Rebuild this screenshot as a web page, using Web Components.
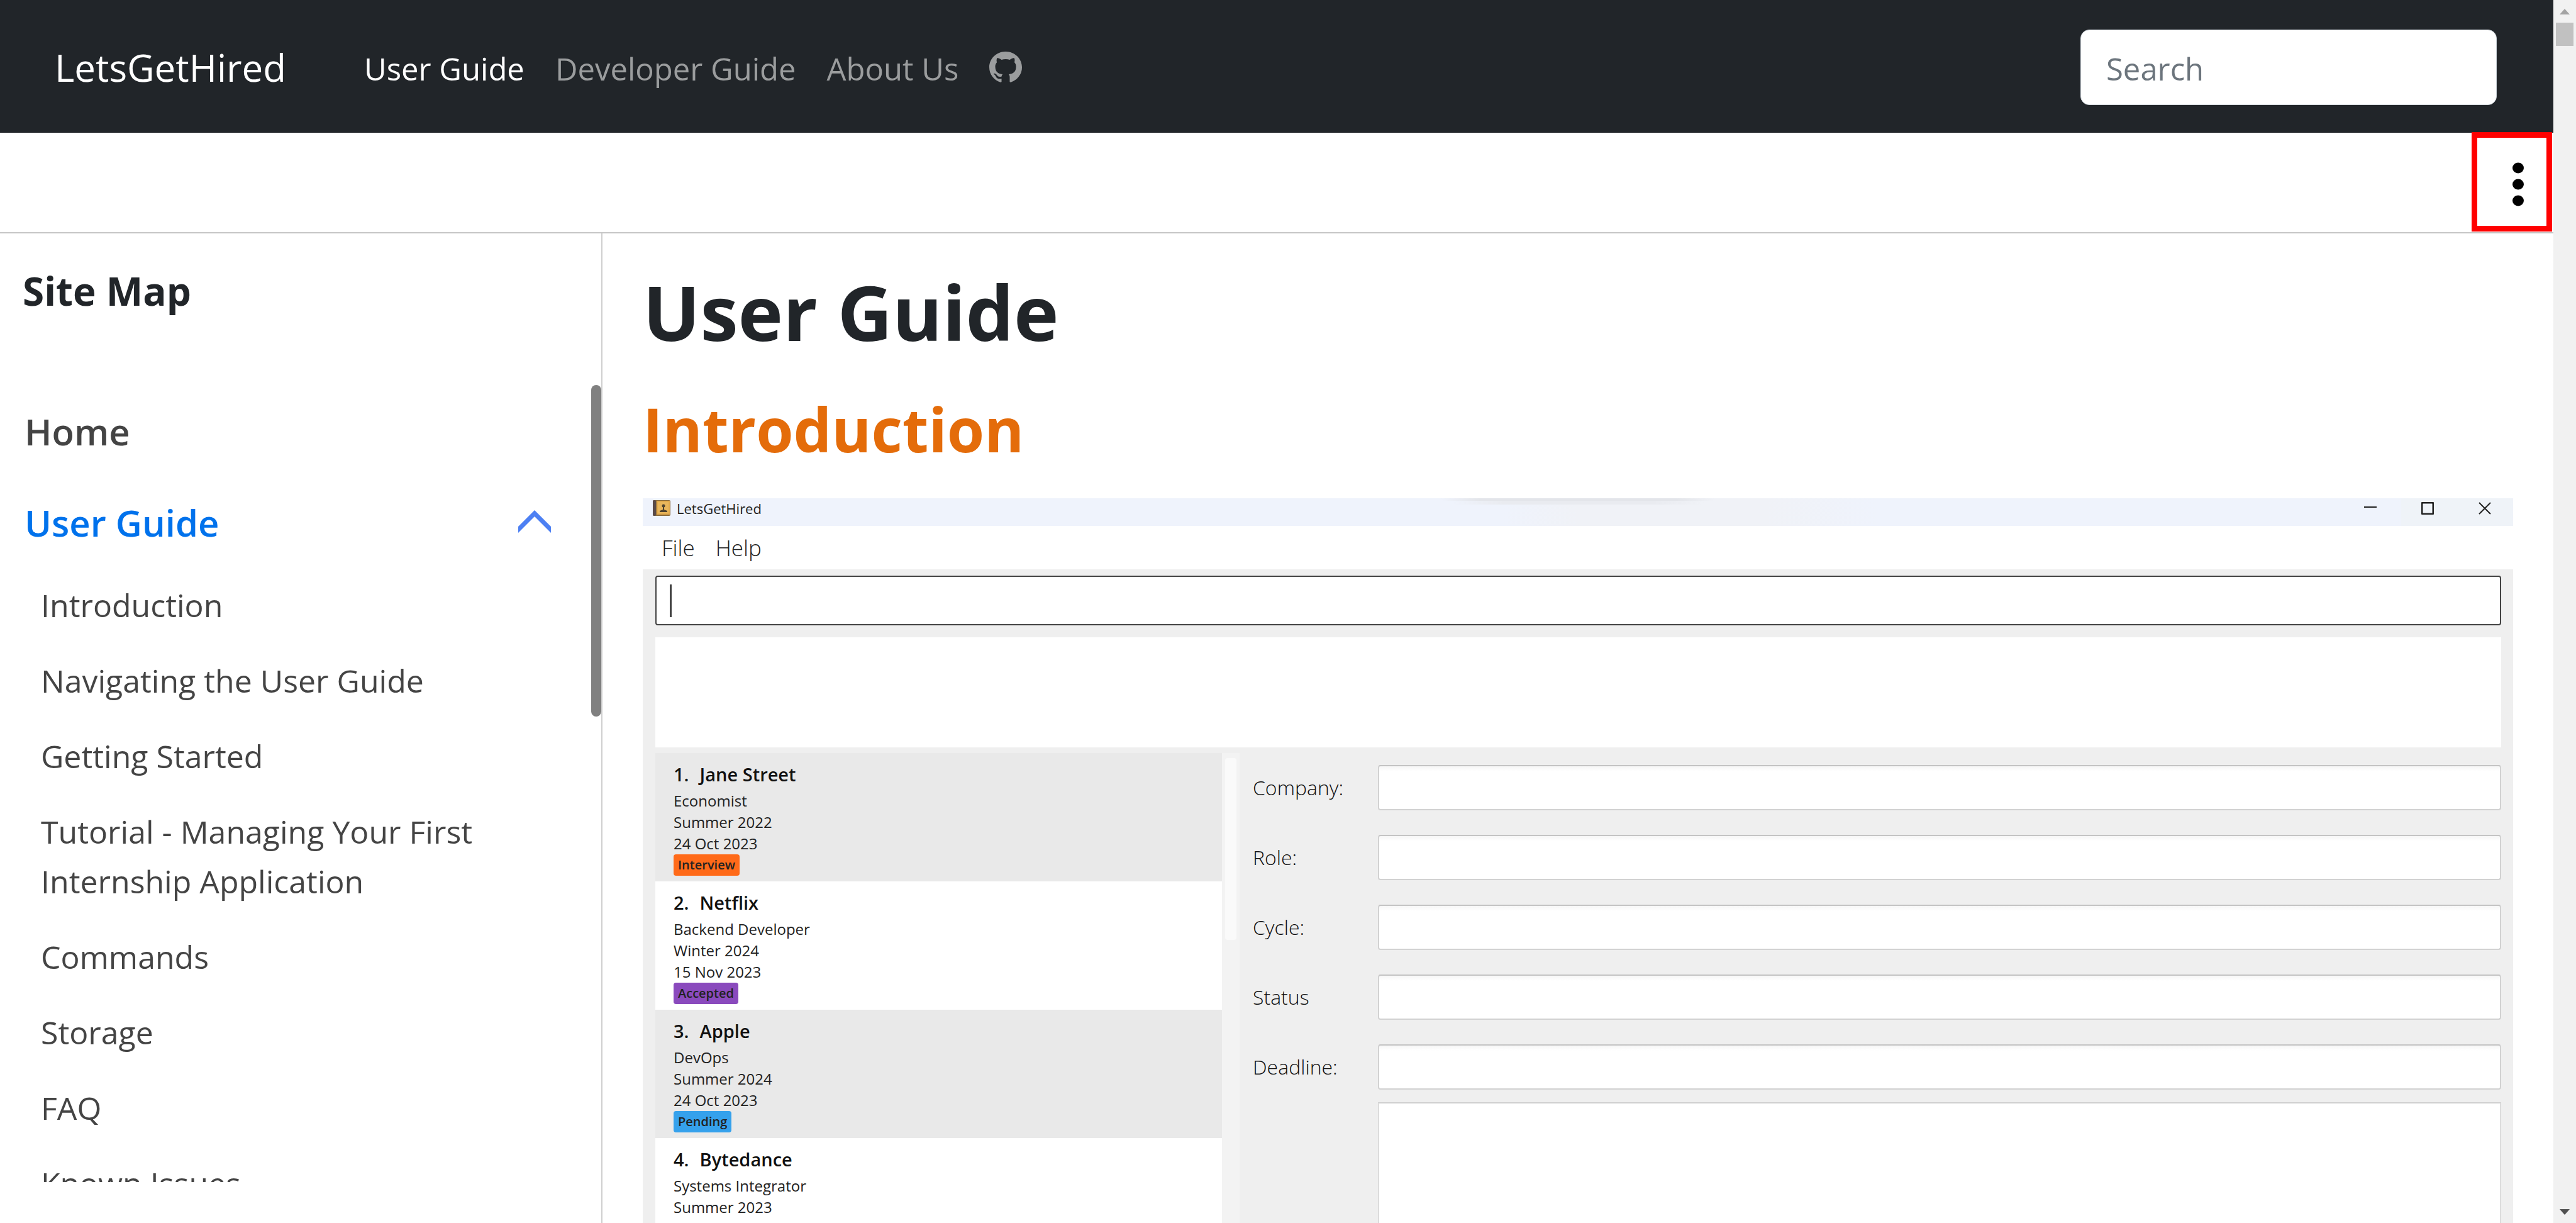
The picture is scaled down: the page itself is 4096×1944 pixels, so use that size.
<!DOCTYPE html>
<html lang="en">
<head>
<meta charset="utf-8">
<title>User Guide - LetsGetHired</title>
<style>
  html, body { margin: 0; height: 100%; overflow: hidden; background: #fff; }
  body { font-family: "Open Sans", "Noto Sans", sans-serif; color: #212529; }
</style>
</head>
<body>
<doc-page>
  <site-header slot="header"></site-header>
  <page-tools slot="tools"></page-tools>
  <site-map slot="sidebar"></site-map>
  <guide-article>
    <app-window></app-window>
  </guide-article>
</doc-page>

<script>
const define = (name, html) => {
  const template = document.createElement('template');
  template.innerHTML = html;
  customElements.define(name, class extends HTMLElement {
    constructor() {
      super();
      this.attachShadow({ mode: 'open' }).append(template.content.cloneNode(true));
    }
  });
};

/* Page frame: header, tool strip, sidebar + content, page scrollbar */
define('doc-page', `
<style>
  :host { display: flex; height: 100vh; }
  .page { flex: 1; min-width: 0; display: flex; flex-direction: column; }
  .body { flex: 1; min-height: 0; display: flex; }
  main { flex: 1; min-width: 0; overflow: hidden; }
</style>
<div class="page">
  <slot name="header"></slot>
  <slot name="tools"></slot>
  <div class="body">
    <slot name="sidebar"></slot>
    <main><slot></slot></main>
  </div>
</div>
<page-scrollbar></page-scrollbar>`);

define('page-scrollbar', `
<style>
  :host { display: flex; flex-direction: column; align-items: center; width: 36px; background: #f1f1f1; }
  button { display: flex; align-items: center; justify-content: center; width: 36px; height: 36px; margin: 0; padding: 0; border: 0; background: none; }
  button:first-child { padding-top: 3px; box-sizing: border-box; }
  svg { display: block; width: 16px; height: 9px; }
  .thumb { width: 28px; height: 37px; background: #c1c1c1; }
  .track { flex: 1; }
</style>
<button aria-label="Scroll up"><svg viewBox="0 0 16 9"><path d="M8 0 16 9H0Z" fill="#a3a3a3"/></svg></button>
<div class="thumb"></div>
<div class="track"></div>
<button aria-label="Scroll down"><svg viewBox="0 0 16 9"><path d="M0 0H16L8 9Z" fill="#505050"/></svg></button>`);

define('site-header', `
<style>
  :host { display: block; background: #212529; }
  header { display: flex; align-items: center; height: 211px; box-sizing: border-box; padding: 2px 90px 0 87px; }
  a { text-decoration: none; white-space: nowrap; }
  .brand { font-size: 60px; line-height: 80px; color: #fff; margin-right: 124px; }
  nav { display: flex; align-items: center; gap: 49px; flex: 1; padding-top: 4px; font-size: 49px; line-height: 72px; }
  nav a { color: #9b9d9e; }
  nav a.active { color: #fff; }
  nav svg { display: block; width: 52px; height: 50px; margin-bottom: 3px; }
  input { width: 662px; height: 120px; box-sizing: border-box; padding: 4px 40px 0; border: 1px solid #ced4da; border-radius: 14px; background: #fff; font: 49px "Open Sans", "Noto Sans", sans-serif; color: #212529; }
  input::placeholder { color: #6c757d; opacity: 1; }
</style>
<header>
  <a class="brand" href="#">LetsGetHired</a>
  <nav>
    <a class="active" href="#">User Guide</a>
    <a href="#">Developer Guide</a>
    <a href="#">About Us</a>
    <a href="#" aria-label="GitHub"><svg viewBox="0 0 16 16" preserveAspectRatio="none" fill="currentColor"><path d="M8 0C3.58 0 0 3.58 0 8c0 3.54 2.29 6.53 5.47 7.59.4.07.55-.17.55-.38 0-.19-.01-.82-.01-1.49-2.01.37-2.53-.49-2.69-.94-.09-.23-.48-.94-.82-1.13-.28-.15-.68-.52-.01-.53.63-.01 1.08.58 1.23.82.72 1.21 1.87.87 2.33.66.07-.52.28-.87.51-1.07-1.78-.2-3.64-.89-3.64-3.95 0-.87.31-1.59.82-2.15-.08-.2-.36-1.02.08-2.12 0 0 .67-.21 2.2.82.64-.18 1.32-.27 2-.27s1.36.09 2 .27c1.53-1.04 2.2-.82 2.2-.82.44 1.1.16 1.92.08 2.12.51.56.82 1.27.82 2.15 0 3.07-1.87 3.75-3.65 3.95.29.25.54.73.54 1.48 0 1.07-.01 1.93-.01 2.2 0 .21.15.46.55.38A8.01 8.01 0 0 0 16 8c0-4.42-3.58-8-8-8z"/></svg></a>
  </nav>
  <input type="search" placeholder="Search" aria-label="Search">
</header>`);

define('page-tools', `
<style>
  :host { display: flex; justify-content: flex-end; height: 158px; padding-right: 2px; border-bottom: 2px solid #c6c6c6; }
  button { display: flex; align-items: center; justify-content: center; width: 128px; height: 158px; margin-top: -1px; box-sizing: border-box; border: 9px solid #f00; padding: 8px 0 0 20px; background: #fff; }
  svg { display: block; width: 18px; height: 70px; }
</style>
<button aria-label="More options"><svg viewBox="0 0 18 70"><ellipse cx="9" cy="9" rx="9" ry="8.5"/><ellipse cx="9" cy="35" rx="9" ry="8.5"/><ellipse cx="9" cy="61" rx="9" ry="8.5"/></svg></button>`);

define('site-map', `
<style>
  :host { display: flex; flex-direction: column; width: 956px; border-right: 2px solid #cfcfcf; }
  h2 { margin: 0; padding: 51px 36px 110px; font-size: 62px; line-height: 80px; font-weight: 700; }
  .scroller { flex: 1; min-height: 0; display: flex; margin-bottom: 65px; overflow: hidden; }
  nav { flex: 1; padding: 34px 64px 0 39px; }
  a { color: #444; text-decoration: none; }
  .top { display: flex; align-items: center; justify-content: space-between; font-size: 58px; line-height: 80px; font-weight: 600; }
  .open { margin-top: 65px; color: #0072ec; }
  .open a { color: inherit; }
  button { display: block; margin: 0; padding: 0 0 4px; border: 0; background: none; }
  svg { display: block; width: 52px; height: 36px; }
  ul { list-style: none; margin: 52px 0 0; padding: 0 0 0 26px; display: flex; flex-direction: column; gap: 41px; font-size: 50px; line-height: 79px; }
  .thumb { width: 16px; height: 527px; border-radius: 8px; background: #808080; }
</style>
<h2>Site Map</h2>
<div class="scroller">
  <nav aria-label="Site map">
    <div class="top"><a href="#">Home</a></div>
    <div class="top open"><a href="#">User Guide</a><button aria-label="Collapse User Guide"><svg viewBox="0 0 52 36"><path d="M26 0 52 26V36L26 10 0 36V26Z" fill="#4d80f3"/></svg></button></div>
    <ul>
      <li><a href="#">Introduction</a></li>
      <li><a href="#">Navigating the User Guide</a></li>
      <li><a href="#">Getting Started</a></li>
      <li><a href="#">Tutorial - Managing Your First Internship Application</a></li>
      <li><a href="#">Commands</a></li>
      <li><a href="#">Storage</a></li>
      <li><a href="#">FAQ</a></li>
      <li><a href="#">Known Issues</a></li>
    </ul>
  </nav>
  <div class="thumb"></div>
</div>`);

define('guide-article', `
<style>
  :host { display: block; padding: 54px 64px 0; }
  h1 { margin: 0 0 61px; font-size: 121px; line-height: 140px; font-weight: 700; }
  h2 { margin: 0 0 54px; font-size: 96px; line-height: 112px; font-weight: 700; color: #e46c0a; }
</style>
<h1>User Guide</h1>
<h2>Introduction</h2>
<slot></slot>`);

/* The LetsGetHired desktop application */
define('app-window', `
<style>
  :host { display: block; background: #efefef; color: #222; }
  .title { display: flex; align-items: flex-start; height: 44px; font-size: 22px; line-height: 28px;
    background:
      linear-gradient(90deg, #eff3fc00, #e3e5ea 14%, #e3e5ea 86%, #f0f2f700) 50% 0 / 434px 4px no-repeat,
      linear-gradient(90deg, #eff3fc00, #e9ebf0 20%, #e9ebf0 80%, #f0f2f700) 50% 4px / 400px 6px no-repeat,
      linear-gradient(90deg, #eff3fc 46%, #f0f2f7 50% 60%, #eff3fc 66% 94%, #eff3f8 94%); }
  .title svg.icon { width: 28px; height: 25px; margin: 3px 10px 0 16px; }
  .title span { flex: 1; margin-top: 2px; }
  .title button { display: flex; align-items: center; justify-content: center; width: 91px; height: 32px; padding: 0; border: 0; background: none; }
  .title button svg { width: 20px; height: 20px; fill: none; stroke: #222; }
  .menu { display: flex; gap: 33px; height: 69px; padding-left: 30px; background: #fff; }
  .menu button { margin: 0; padding: 0; border: 0; background: none; font: 300 35px "Open Sans", "Noto Sans", sans-serif; color: #222; }
  .body { padding: 10px 19px 0 20px; }
  .command { display: block; width: 100%; height: 79px; box-sizing: border-box; border: 2px solid #444; border-radius: 4px; padding: 0 20px; font: 35px "Open Sans", sans-serif;
    background: linear-gradient(#444, #444) 21px 12px / 3px 52px no-repeat #fff; }
  .result { height: 175px; margin: 19px 0 9px; background: #fff; }
  .columns { display: flex; }
  ol { list-style: none; flex: 0 0 901px; margin: 0; padding: 0; }
  .bar { width: 28px; padding-top: 8px; box-sizing: border-box; background: #f3f3f3; }
  .bar div { width: 18px; height: 289px; margin: 0 5px; border-radius: 4px; background: #fafafa; }
  form { flex: 1; padding: 19px 0 0 21px; display: flex; flex-direction: column; gap: 39px; }
  form textarea { display: block; height: 420px; margin: -19px 0 0 199px; box-sizing: border-box; border: 0 solid #dcdcdc; border-width: 2px 2px 0; border-top-color: #cfcfcf; background: #fff; resize: none; }
</style>
<div class="title">
  <svg class="icon" viewBox="0 0 28 25"><rect width="28" height="25" rx="2" fill="#8a6a3c"/><rect x="6" y="1" width="21" height="22" fill="#e2aa4c"/><rect x="8" y="3" width="17" height="18" fill="#e9b65c"/><rect width="5" height="25" rx="2" fill="#5a4a48"/><circle cx="17" cy="9" r="2.500" fill="#4f432e"/><path d="M16 11h2v4l5 2v2H11v-2l5-2z" fill="#4f432e"/></svg>
  <span>LetsGetHired</span>
  <button aria-label="Minimize"><svg viewBox="0 0 20 20"><path d="M0 8H20" stroke-width="2"/></svg></button>
  <button aria-label="Maximize"><svg viewBox="0 0 20 20"><rect x="1" y="1" width="18" height="18" rx="2" stroke-width="3"/></svg></button>
  <button aria-label="Close"><svg viewBox="0 0 20 20"><path d="M1 1 19 19M19 1 1 19" stroke-width="2"/></svg></button>
</div>
<div class="menu"><button>File</button><button>Help</button></div>
<div class="body">
  <input class="command" type="text" aria-label="Command">
  <div class="result"></div>
  <div class="columns">
    <ol>
      <li><internship-card style="--row:#e9e9e9;--tag:#ff6a19"><span slot="no">1.</span><span slot="name">Jane Street</span><span slot="role">Economist</span><span slot="cycle">Summer 2022</span><span slot="date">24 Oct 2023</span><span slot="status">Interview</span></internship-card></li>
      <li><internship-card style="--row:#fff;--tag:#8a4abd"><span slot="no">2.</span><span slot="name">Netflix</span><span slot="role">Backend Developer</span><span slot="cycle">Winter 2024</span><span slot="date">15 Nov 2023</span><span slot="status">Accepted</span></internship-card></li>
      <li><internship-card style="--row:#e9e9e9;--tag:#35a1ec"><span slot="no">3.</span><span slot="name">Apple</span><span slot="role">DevOps</span><span slot="cycle">Summer 2024</span><span slot="date">24 Oct 2023</span><span slot="status">Pending</span></internship-card></li>
      <li><internship-card style="--row:#fff"><span slot="no">4.</span><span slot="name">Bytedance</span><span slot="role">Systems Integrator</span><span slot="cycle">Summer 2023</span></internship-card></li>
    </ol>
    <div class="bar"><div></div></div>
    <form>
      <form-row label="Company:"></form-row>
      <form-row label="Role:"></form-row>
      <form-row label="Cycle:"></form-row>
      <form-row label="Status"></form-row>
      <form-row label="Deadline:"></form-row>
      <textarea aria-label="Notes"></textarea>
    </form>
  </div>
</div>`);

define('internship-card', `
<style>
  :host { display: block; height: 204px; box-sizing: border-box; padding: 14px 28px 0 29px; background: var(--row); font-size: 24px; line-height: 34px; }
  .head { display: flex; gap: 17px; margin-bottom: 5px; font-size: 29px; line-height: 40px; font-weight: 600; color: #111; }
  .tag { display: inline-block; padding: 0 7px; border-radius: 4px; background: var(--tag, transparent); font-size: 20px; font-weight: 600; vertical-align: top; }
</style>
<div class="head"><slot name="no"></slot><slot name="name"></slot></div>
<div><slot name="role"></slot></div>
<div><slot name="cycle"></slot></div>
<div><slot name="date"></slot></div>
<div class="tag"><slot name="status"></slot></div>`);

customElements.define('form-row', class extends HTMLElement {
  connectedCallback() {
    if (this.shadowRoot) return;
    this.attachShadow({ mode: 'open' }).innerHTML = `
<style>
  :host { display: flex; align-items: center; }
  label { width: 199px; font-size: 32px; line-height: 44px; font-weight: 300; color: #111; }
  input { flex: 1; min-width: 0; height: 72px; box-sizing: border-box; padding: 0 12px; border: 2px solid #d2d2d2; border-top-color: #c4c4c4; border-radius: 4px; background: linear-gradient(#f6f6f6, #fff 8px); font: 32px "Open Sans", sans-serif; }
</style>
<label for="field">${this.getAttribute('label')}</label>
<input id="field" type="text">`;
  }
});
</script>
</body>
</html>
